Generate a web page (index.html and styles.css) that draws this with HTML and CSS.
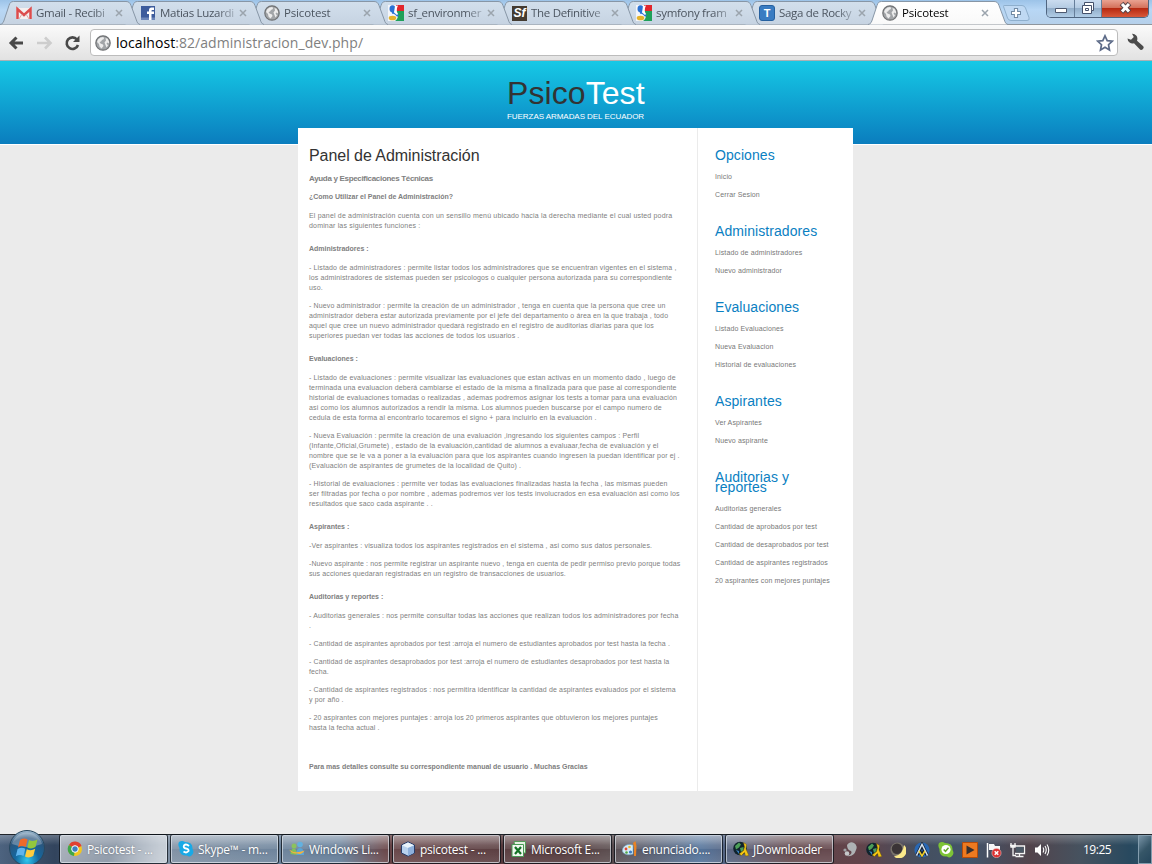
FILE: index.html
```html
<!DOCTYPE html>
<html lang="es">
<head>
<meta charset="utf-8">
<title>Psicotest</title>
<link rel="stylesheet" href="styles.css">
</head>
<body>
<svg class="defs" width="0" height="0">
  <defs>
    <linearGradient id="tabfill" x1="0" y1="0" x2="0" y2="1"><stop offset="0" stop-color="#d2dfec"/><stop offset="1" stop-color="#c6d3e2"/></linearGradient>
    <linearGradient id="tabon" x1="0" y1="0" x2="0" y2="1"><stop offset="0" stop-color="#ffffff"/><stop offset="1" stop-color="#f9f9f9"/></linearGradient>
    <radialGradient id="orb" cx=".5" cy=".85" r=".85"><stop offset="0" stop-color="#2fc7ee"/><stop offset=".4" stop-color="#14679f"/><stop offset=".75" stop-color="#2b557c"/><stop offset="1" stop-color="#a9c4d8"/></radialGradient>
    <symbol id="tab" viewBox="0 0 140 25"><path d="M0 24.5C3 24 3.500 22 4.500 19L9 5.500C10 2.500 11 1.500 13.500 1.500H126C129 1.500 130 3 131 5.500L136 19C137 22.500 138 24 140 24.500"/></symbol>
    <symbol id="globe" viewBox="0 0 16 16"><circle cx="8" cy="8" r="7.200" fill="#a2a5a8" stroke="#6f7173" stroke-width="1.200"/><path d="M3 4.500L5.500 2.500 8.500 2 9 4 7 5 6 6.500 4.500 7 5.500 8.500 8 9.500 8.500 11 6.500 13.500 4.500 11.500 4 9 2 7zM10.500 3L12.500 3.800 14 6.500 14 8.500 12.500 7.500 11.500 8.500 13 10.500 11.500 12.500 10.500 10 9.500 7.500 11 5.500z" fill="#ececec"/></symbol>
    <symbol id="google" viewBox="0 0 16 16"><path d="M0 0H16V16H0z" fill="#f3f5fa"/><path d="M8 0H16V7H9C8 5 9 3 8 0z" fill="#e2262c"/><path d="M9 6H16V16H7C11 13 10 10 8 8z" fill="#1fa05a"/><ellipse cx="4.500" cy="3.800" rx="3" ry="3.500" fill="#2a72d4"/><path d="M4 8C6 7 8 8.500 10 11" stroke="#2a72d4" stroke-width="2.200" fill="none"/><ellipse cx="4.500" cy="13" rx="3.800" ry="2.300" fill="#e5b32c"/><path d="M7 1L10 .5 9 3 8.500 6 10 9 9 10 6 7.500z" fill="#fff"/></symbol>
    <symbol id="jd" viewBox="0 0 16 16"><circle cx="7" cy="7.500" r="6.800" fill="#10232c"/><path d="M2 5L6 1.500 8 3.500 6 6.500 3 8.500zM7 7L10.500 6 10.500 9 8 11z" fill="#4c9e58"/><path d="M3 9L6 10 6 13" fill="#357fc0"/><path d="M10.500 1.500L13.500 3.500 13 8 15.800 14.500 12.500 15 11.500 11.500 8.500 14.500 6 13 10.500 9.500 11.500 6z" fill="#f3c513" stroke="#66520a" stroke-width=".4"/></symbol>
    <symbol id="x" viewBox="0 0 8 8"><path d="M1 1L7 7M7 1L1 7" stroke="#9ba4ad" stroke-width="1.500"/></symbol>
  </defs>
</svg>

<header class="chrome">
  <div class="strip">
    <div class="tab t1"><svg class="shape"><use href="#tab"/></svg><svg class="ico" viewBox="0 0 16 16"><path d="M.5 3H15.500V14H.5z" fill="#f4efef"/><path d="M1.500 14V4L8 10 14.500 4V14" fill="none" stroke="#dc4c4c" stroke-width="2.500"/><path d="M3 14L6 9M13 14L10 9" stroke="#dda7a7"/></svg><span class="label">Gmail - Recibi</span><svg class="close"><use href="#x"/></svg></div>
    <div class="tab t2"><svg class="shape"><use href="#tab"/></svg><svg class="ico" viewBox="0 0 16 16"><path d="M1 1H15V15H1z" fill="#3d5c9c"/><path d="M1 12.500H15V15H1z" fill="#6d87ba"/><path d="M9 15V9H7V6.500H9V5Q9 2.500 11.500 2.500H14V5H12Q11.500 5 11.500 6V6.500H14V9H11.500V15z" fill="#fff"/></svg><span class="label">Matias Luzardi</span><svg class="close"><use href="#x"/></svg></div>
    <div class="tab t3"><svg class="shape"><use href="#tab"/></svg><svg class="ico"><use href="#globe"/></svg><span class="label short">Psicotest</span><svg class="close"><use href="#x"/></svg></div>
    <div class="tab t4"><svg class="shape"><use href="#tab"/></svg><svg class="ico"><use href="#google"/></svg><span class="label">sf_environmer</span><svg class="close"><use href="#x"/></svg></div>
    <div class="tab t5"><svg class="shape"><use href="#tab"/></svg><span class="ico sf">Sf</span><span class="label">The Definitive</span><svg class="close"><use href="#x"/></svg></div>
    <div class="tab t6"><svg class="shape"><use href="#tab"/></svg><svg class="ico"><use href="#google"/></svg><span class="label">symfony fram</span><svg class="close"><use href="#x"/></svg></div>
    <div class="tab t7"><svg class="shape"><use href="#tab"/></svg><span class="ico tt">T</span><span class="label">Saga de Rocky</span><svg class="close"><use href="#x"/></svg></div>
    <div class="tab active"><svg class="shape"><use href="#tab"/></svg><svg class="ico"><use href="#globe"/></svg><span class="label short">Psicotest</span><svg class="close"><use href="#x"/></svg></div>
    <svg class="newtab" viewBox="0 0 28 16"><path d="M1.500 1.500Q1 .5 3 .5H20Q22.500 .5 23.500 3L27 12.500Q28 15.500 25 15.500H9Q6.500 15.500 5.500 13z" fill="#bfd9f3" stroke="#8eafcd"/><path d="M14 3V13M9 8H19" stroke="#7089a3" stroke-width="4.200"/><path d="M14 4V12M10 8H18" stroke="#fff" stroke-width="2.200"/></svg>
    <div class="winbtns">
      <span class="wb min"><svg width="27" height="17"><path d="M8.500 8.500H19.500V12.500H8.500z" fill="#fff" stroke="#4d5970"/></svg></span>
      <span class="wb max"><svg width="26" height="17"><path d="M9.500 2.500H18.500V10.500H16.500V13.500H7.500V5.500H9.500z" fill="#fff" stroke="#44506a"/><path d="M9.500 5.500H16.500V10.500M10.500 8.500H13.500V10.500H10.500z" fill="none" stroke="#44506a"/></svg></span>
      <span class="wb cls"><svg width="46" height="17"><path d="M19.500 3.500L27.500 12M27.500 3.500L19.500 12" stroke="#584449" stroke-width="5"/><path d="M20 4L27 11.500M27 4L20 11.500" stroke="#fff" stroke-width="3"/></svg></span>
    </div>
  </div>
  <div class="toolbar">
    <svg class="nav" viewBox="0 0 82 20"><path d="M23 10H12M16.500 4.500L11 10 16.500 15.500" fill="none" stroke="#484848" stroke-width="3"/><path d="M37 10H49M45 4.500L50.500 10 45 15.500" fill="none" stroke="#cdcdcd" stroke-width="2.600"/><path d="M77 6.500A5.800 5.800 0 1 0 78 12" fill="none" stroke="#484848" stroke-width="2.600"/><path d="M79.500 2.500V9H73z" fill="#484848"/></svg>
    <div class="omni"><svg class="ico"><use href="#globe"/></svg><span class="url"><b>localhost</b>:82/administracion_dev.php/</span><svg class="star" viewBox="0 0 18 18"><path d="M9 1.800L11.200 6.600 16.300 7.200 12.500 10.700 13.500 16 9 13.300 4.500 16 5.500 10.700 1.700 7.200 6.800 6.600z" fill="#fff" stroke="#5d6b88" stroke-width="1.700"/></svg></div>
    <svg class="wrench" viewBox="0 0 18 18"><path d="M1.500 5.500A5 5 0 0 0 8 10.200L13.500 16A2 2 0 0 0 17 13L11 7.700A5 5 0 0 0 6 .8L7.800 4 5 6.800z" fill="#4b4b4b"/></svg>
  </div>
</header>

<div class="page">
  <div class="banner"><div class="brand"><h1>Psico<span>Test</span></h1><p>FUERZAS ARMADAS DEL ECUADOR</p></div></div>
  <div class="sheet">
    <main class="content">
      <h2>Panel de Administración</h2>
      <h3>Ayuda y Especificaciones Técnicas</h3>
      <h4 class="first">¿Como Utilizar el Panel de Administración?</h4>
      <p class="intro">El panel de administración cuenta con un sensillo menú ubicado hacia la derecha mediante el cual usted podra<br>dominar las siguientes funciones :</p>
      <h4>Administradores :</h4>
      <p>- Listado de administradores : permite listar todos los administradores que se encuentran vigentes en el sistema ,<br>los administradores de sistemas pueden ser psicologos o cualquier persona autorizada para su correspondiente<br>uso.</p>
      <p>- Nuevo administrador : permite la creación de un administrador , tenga en cuenta que la persona que cree un<br>administrador debera estar autorizada previamente por el jefe del departamento o área en la que trabaja , todo<br>aquel que cree un nuevo administrador quedará registrado en el registro de auditorias diarias para que los<br>superiores puedan ver todas las acciones de todos los usuarios .</p>
      <h4>Evaluaciones :</h4>
      <p>- Listado de evaluaciones : permite visualizar las evaluaciones que estan activas en un momento dado , luego de<br>terminada una evaluacion deberá cambiarse el estado de la misma a finalizada para que pase al correspondiente<br>historial de evaluaciones tomadas o realizadas , ademas podremos asignar los tests a tomar para una evaluación<br>asi como los alumnos autorizados a rendir la misma. Los alumnos pueden buscarse por el campo numero de<br>cedula de esta forma al encontrarlo tocaremos el signo + para incluirlo en la evaluación .</p>
      <p>- Nueva Evaluación : permite la creación de una evaluación ,ingresando los siguientes campos : Perfil<br>(Infante,Oficial,Grumete) , estado de la evaluación,cantidad de alumnos a evaluaar,fecha de evaluación y el<br>nombre que se le va a poner a la evaluación para que los aspirantes cuando ingresen la puedan identificar por ej .<br>(Evaluación de aspirantes de grumetes de la localidad de Quito) .</p>
      <p>- Historial de evaluaciones : permite ver todas las evaluaciones finalizadas hasta la fecha , las mismas pueden<br>ser filtradas por fecha o por nombre , ademas podremos ver los tests involucrados en esa evaluación asi como los<br>resultados que saco cada aspirante . .</p>
      <h4>Aspirantes :</h4>
      <p>-Ver aspirantes : visualiza todos los aspirantes registrados en el sistema , asi como sus datos personales.</p>
      <p class="tight">-Nuevo aspirante : nos permite registrar un aspirante nuevo , tenga en cuenta de pedir permiso previo porque todas<br>sus acciones quedaran registradas en un registro de transacciones de usuarios.</p>
      <h4>Auditorias y reportes :</h4>
      <p>- Auditorias generales : nos permite consultar todas las acciones que realizan todos los administradores por fecha<br>.</p>
      <p class="tight">- Cantidad de aspirantes aprobados por test :arroja el numero de estudiantes aprobados por test hasta la fecha .</p>
      <p class="tight">- Cantidad de aspirantes desaprobados por test :arroja el numero de estudiantes desaprobados por test hasta la<br>fecha.</p>
      <p>- Cantidad de aspirantes registrados : nos permitira identificar la cantidad de aspirantes evaluados por el sistema<br>y por año .</p>
      <p class="tight">- 20 aspirantes con mejores puntajes : arroja los 20 primeros aspirantes que obtuvieron los mejores puntajes<br>hasta la fecha actual .</p>
      <h4 class="last">Para mas detalles consulte su correspondiente manual de usuario . Muchas Gracias</h4>
    </main>
    <aside class="side">
      <section><h2>Opciones</h2><a>Inicio</a><a>Cerrar Sesion</a></section>
      <section><h2>Administradores</h2><a>Listado de administradores</a><a>Nuevo administrador</a></section>
      <section><h2>Evaluaciones</h2><a>Listado Evaluaciones</a><a>Nueva Evaluacion</a><a>Historial de evaluaciones</a></section>
      <section><h2>Aspirantes</h2><a>Ver Aspirantes</a><a>Nuevo aspirante</a></section>
      <section><h2>Auditorias y<br>reportes</h2><a>Auditorias generales</a><a>Cantidad de aprobados por test</a><a>Cantidad de desaprobados por test</a><a>Cantidad de aspirantes registrados</a><a>20 aspirantes con mejores puntajes</a></section>
    </aside>
  </div>
</div>

<footer class="taskbar">
  <svg class="start" viewBox="0 0 38 38"><circle cx="19" cy="19" r="17.500" fill="url(#orb)" stroke="#28485f"/><path d="M4 15A15.500 15.500 0 0 1 34 15Q19 21 4 15z" fill="#fff" opacity=".28"/><path d="M12 11Q16 8.500 19.500 10.500L17.800 18Q14 16 10 18.500z" fill="#ee6a2b"/><path d="M21 11Q25 13 29.500 10.500L27.500 18Q23.500 20.500 19.300 18.500z" fill="#93c83d"/><path d="M9.600 20Q13.500 17.800 17.300 19.700L15.500 27Q12 25 7.800 27.300z" fill="#5fb4ee"/><path d="M18.800 20.300Q23 22.200 27.200 19.800L25.300 27Q21 29.500 17 27.500z" fill="#fdcc3e"/></svg>
  <div class="tasks">
    <div class="task on"><svg viewBox="0 0 16 16"><circle cx="8" cy="8" r="7" fill="#f2c61f"/><path d="M8 8L2 4A7 7 0 0 1 14.500 5z" fill="#e13f32"/><path d="M8 8L2 4A7 7 0 0 0 7 15z" fill="#3fa648"/><circle cx="8" cy="8" r="3.300" fill="#3d7ec2" stroke="#fff"/></svg><span>Psicotest - ...</span></div>
    <div class="task"><svg viewBox="0 0 16 16"><path d="M1 1Q4-1 7 1Q15 1 14.500 8Q17 12 13 15Q11 16 9 14.500Q1 15 1.500 7Q-.5 4 1 1z" fill="#19a9e6"/><path d="M11 5Q8 2.500 6 4.500Q5 7 8 7.500Q11 8 10.500 10Q8.500 12.500 5.500 10.500" fill="none" stroke="#fff" stroke-width="1.900"/></svg><span>Skype™ - m...</span></div>
    <div class="task"><svg viewBox="0 0 16 16"><circle cx="5" cy="5" r="2.500" fill="#8cc25e"/><circle cx="11" cy="3.500" r="2.800" fill="#62b1e0"/><path d="M1.500 13Q2 7 5 7.500Q8 8 8 14z" fill="#83bf5c"/><path d="M7.500 14Q7 7 11 7Q15 7 15 14z" fill="#5aa5d8"/><path d="M0 8.500Q6 13.500 15.500 9.500Q13 14 8 12.500Q3 13 0 8.500z" fill="#f5b33b"/></svg><span>Windows Li...</span></div>
    <div class="task"><svg viewBox="0 0 16 16"><path d="M1.500 4L8 .8 14.500 4V12L8 15.200 1.500 12z" fill="#b9d2ee" stroke="#283c68"/><path d="M2 4.300L8 7 14 4.300 8 1.500z" fill="#eaf4fc"/><path d="M8 7V15L14 12V4.500z" fill="#8eb0dc"/></svg><span>psicotest - ...</span></div>
    <div class="task"><svg viewBox="0 0 16 16"><path d="M3 .5H14.500V12H5z" fill="#e4f1e1" stroke="#559b58"/><path d="M1 3.500H12.500V15.500H1z" fill="#f0f8ef" stroke="#4a9a55"/><path d="M4 6L10 13M10 6L4 13" stroke="#147325" stroke-width="2.200"/></svg><span>Microsoft E...</span></div>
    <div class="task"><svg viewBox="0 0 16 16"><path d="M1 7Q4 2 11 4L11 13Q5 15 1.500 12Q-.5 10 1 7z" fill="#d6edf9" stroke="#6fa8c8" stroke-width=".6"/><circle cx="4" cy="8" r="1.400" fill="#e04938"/><circle cx="7.500" cy="6" r="1.300" fill="#f1b82a"/><circle cx="4.500" cy="11.500" r="1.300" fill="#53a646"/><circle cx="8.500" cy="11" r="1.600" fill="#3c7bc4"/><path d="M12 15V6L11 2 13.500 0 14.500 5 14 15z" fill="#e88325"/></svg><span>enunciado....</span></div>
    <div class="task"><svg><use href="#jd"/></svg><span>JDownloader</span></div>
  </div>
  <div class="tray">
    <svg viewBox="0 0 16 16"><path d="M5 3A5 5 0 1 1 14 8Q12 15 5 14Q11 12 9 9Q5 8 5 3z" fill="#aeb2b4"/><circle cx="3" cy="8" r="1.600" fill="#9fa3a6"/><circle cx="5" cy="11.500" r="2.300" fill="#c5c8ca"/></svg>
    <svg><use href="#jd"/></svg>
    <svg viewBox="0 0 16 16"><circle cx="7.500" cy="7.500" r="7" fill="#77726a"/><path d="M14 3A7.500 7.500 0 1 1 4 14.500Q13 13 14 3z" fill="#fbe98a"/><circle cx="7" cy="6.800" r="5.200" fill="#3a3436"/></svg>
    <svg viewBox="0 0 16 16"><circle cx="8" cy="8" r="7.600" fill="#2868b5"/><path d="M3 13L8 3 13 13M5 8L8 13 11 8" fill="none" stroke="#18222f" stroke-width="3.400"/><path d="M2.500 13.500L8 2.500 13.500 13.500" fill="none" stroke="#d6e4f2" stroke-width="1.500"/><path d="M5 9L8 14 11 9" fill="none" stroke="#f0cf29" stroke-width="1.500"/></svg>
    <svg viewBox="0 0 16 16"><path d="M1 1Q4-1 7 1Q15 1 14.500 8Q17 12 13 15Q11 16 9 14.500Q1 15 1.500 7Q-.5 4 1 1z" fill="#7dc436"/><circle cx="8" cy="7.500" r="4.600" fill="#fff"/><path d="M5.700 7.500L7.500 9.300 10.500 5.700" fill="none" stroke="#67a92a" stroke-width="1.500"/></svg>
    <svg viewBox="0 0 16 16"><path d="M.5.5H15.500V15.500H.5z" fill="#ee7a20" stroke="#b74c0a"/><path d="M4.500 3.500V12.500L12.500 8z" fill="#38302f"/></svg>
    <svg viewBox="0 0 16 16"><path d="M1.500 1V15.500" stroke="#fff" stroke-width="1.500"/><path d="M3 2H8L9 4H14V9H8L7 8H3z" fill="#f6f6f6"/><circle cx="10.500" cy="11" r="4.600" fill="#db3030" stroke="#f0bbbb" stroke-width=".6"/><path d="M8.700 9.200L12.300 12.800M12.300 9.200L8.700 12.800" stroke="#fff" stroke-width="1.500"/></svg>
    <svg viewBox="0 0 16 16"><path d="M5 4H14.500V11.500H5M9.500 12V14M5.500 14.500H13.500M1 1V5H5V1M0 3.500H6M3 5V13.500H6" fill="none" stroke="#f4f4f4" stroke-width="1.300"/><path d="M6 5H13.500V10.500H6z" fill="#4b5865"/></svg>
    <svg viewBox="0 0 16 16"><path d="M1 5.500H3.500L7 2V14L3.500 10.500H1z" fill="#fff"/><path d="M9 5.500Q10.500 8 9 10.500M11 4Q13.500 8 11 12M13 2.500Q16.500 8 13 13.500" fill="none" stroke="#fff" stroke-width="1.100"/></svg>
  </div>
  <span class="clock">19:25</span>
  <span class="peek"></span>
</footer>
</body>
</html>
```

FILE: styles.css
```css
* { box-sizing: border-box; margin: 0; padding: 0; }
body { width: 1152px; height: 864px; overflow: hidden; background: #ebebeb; font-family: "Liberation Sans", Arial, sans-serif; display: flex; flex-direction: column; }
.defs { position: absolute; }
svg { flex: none; display: block; }

/* browser window */
.chrome { height: 61px; flex: none; font-family: "Open Sans", "Noto Sans", sans-serif; }
.strip { height: 25px; display: flex; background: linear-gradient(#9cc3e8, #b8d7f5 40%, #b5d0ea); border-bottom: 1px solid #8e959c; }
.tab { position: relative; width: 140px; height: 25px; flex: none; margin-right: -16px; padding: 5px 0 0 16px; display: flex; color: #4c5560; fill: url(#tabfill); stroke: #8796a6; }
.tab > * { position: relative; stroke: none; }
.tab .shape { position: absolute; left: 0; top: 0; width: 140px; height: 25px; stroke: #8796a6; }
.t1 { z-index: 8; } .t2 { z-index: 7; } .t3 { z-index: 6; } .t4 { z-index: 5; } .t5 { z-index: 4; } .t6 { z-index: 3; } .t7 { z-index: 2; }
.active { z-index: 9; color: #000; fill: url(#tabon); padding-left: 14px; }
.ico { width: 16px; height: 16px; flex: none; }
.label { width: 76px; margin-left: 4px; height: 17px; line-height: 16px; font-size: 11.500px; letter-spacing: -0.3px; white-space: nowrap; -webkit-mask-image: linear-gradient(90deg, #000 75%, rgba(0,0,0,.25)); mask-image: linear-gradient(90deg, #000 75%, rgba(0,0,0,.25)); }
.short { letter-spacing: -0.15px; }
.close { width: 8px; height: 8px; margin: 4px 0 0 3px; }
.sf { width: 15px; height: 15px; margin: 1px 0 0 0; background: #443b31; color: #fff; font: italic bold 12px/14px "Liberation Sans", sans-serif; text-align: center; }
.sf + .label { width: 77px; }
.tt { background: #397cc2; border: 1px solid #25609f; border-radius: 3px; color: #fff; font: bold 11px/14px "Liberation Sans", sans-serif; text-align: center; margin-left: -1px; }
.newtab { width: 28px; height: 16px; margin: 5px 0 0 10px; position: relative; }
.winbtns { display: flex; height: 18px; margin-left: 16px; border: 1px solid #4f6580; border-top: 0; border-radius: 0 0 5px 5px; overflow: hidden; }
.wb { display: block; height: 17px; background: linear-gradient(#cbdcef, #b4cbe3 45%, #92aeca 50%, #b0cce6); border-right: 1px solid #667e9a; }
.min { width: 28px; } .max { width: 27px; }
.cls { width: 46px; border: 0; background: linear-gradient(#e9a291, #d4725c 45%, #b72a12 50%, #d8583a); }
.toolbar { height: 36px; display: flex; align-items: flex-start; background: linear-gradient(#fafafa, #e2e2e2); border-bottom: 1px solid #a9b1b5; }
.nav { width: 82px; height: 20px; margin: 8px 0 0 0; }
.omni { width: 1028px; height: 27px; margin: 4px 0 0 8px; display: flex; align-items: center; background: #fff; border: 1px solid #bcbcbc; border-radius: 4px; padding: 0 3px 0 4px; }
.url { flex: 1; margin-left: 5px; color: #808080; font-size: 14px; line-height: 24px; letter-spacing: 0.06px; white-space: nowrap; }
.url b { font-weight: 400; color: #000; }
.star { width: 18px; height: 18px; }
.wrench { width: 18px; height: 18px; margin: 8px 0 0 8px; }

/* site */
.page { height: 773px; flex: none; }
.banner { height: 84px; background: linear-gradient(#16c9e6, #0a7dbe); border-bottom: 1px solid #fff; display: flex; padding: 15px 0 0 507px; color: #fff; }
.brand h1 { font-size: 32px; line-height: 34px; font-weight: 400; color: #333; letter-spacing: 0.08px; white-space: nowrap; }
.brand h1 span { color: #fff; }
.brand p { font-size: 8px; line-height: 10px; margin-top: 2px; white-space: nowrap; letter-spacing: -0.05px; }
.sheet { position: relative; width: 555px; height: 663px; margin: -17px 0 0 298px; background: #fff; display: flex; }
.content { width: 400px; border-right: 1px solid #ebebeb; padding: 18px 0 0 11px; color: #808080; white-space: nowrap; display: flex; flex-direction: column; }
.content h2 { font-size: 16px; line-height: 20px; font-weight: 400; color: #333; letter-spacing: -0.05px; }
.content h3 { font-size: 8px; line-height: 10px; margin: 8px 0 7px; letter-spacing: -0.32px; }
.content h4 { font-size: 7px; line-height: 10px; margin: 5px 0 9px; letter-spacing: -0.02px; }
.content .first { margin-top: 1px; }
.content .last { margin-top: 21px; }
.content p { font-size: 7px; line-height: 10px; margin-bottom: 8px; letter-spacing: 0.145px; }
.content .intro { letter-spacing: 0.175px; }
.content .tight { letter-spacing: 0.11px; }
.side { padding: 22px 0 0 17px; white-space: nowrap; }
.side section { margin-bottom: 26px; display: flex; flex-direction: column; gap: 8px; }
.side h2 { font-size: 14px; line-height: 10px; font-weight: 400; color: #0a80c2; margin-bottom: 4px; letter-spacing: 0.07px; }
.side a { font-size: 7px; line-height: 10px; color: #777; letter-spacing: 0.13px; }

/* desktop taskbar */
.taskbar { height: 30px; flex: none; display: flex; align-items: flex-start; border-top: 1px solid #20252b; font-family: "Open Sans", "Noto Sans", sans-serif; color: #fff; background: linear-gradient(rgba(255,255,255,.25), rgba(255,255,255,0) 35%), linear-gradient(90deg, #4d637f 0, #32445d 55px, #8090a3 160px, #70859c 240px, #5f7995 340px, #664346 385px, #4f3437 560px, #57494b 610px, #4e6f98 700px, #604448 790px, #62434a 860px, #454f5f 920px, #42546a 970px, #52444c 1030px, #46525f 1080px, #28495f 1130px, #2e5369 1152px); }
.start { width: 38px; height: 38px; margin: -6px 0 0 8px; position: relative; }
.tasks { display: flex; gap: 4px; margin-left: 14px; }
.task { width: 107px; height: 28px; border: 1px solid rgba(225,231,238,.65); border-radius: 2px; box-shadow: 0 0 0 1px rgba(10,15,22,.75); padding: 5px 0 0 6px; display: flex; background: linear-gradient(rgba(255,255,255,.32), rgba(255,255,255,.12) 48%, rgba(255,255,255,.03) 50%, rgba(255,255,255,.12)); font-size: 12px; line-height: 17px; letter-spacing: -0.25px; white-space: nowrap; text-shadow: 0 0 2px rgba(0,0,0,.35); }
.task svg { width: 16px; height: 16px; margin-right: 4px; }
.task.on { background: linear-gradient(115deg, rgba(255,255,255,.6), rgba(255,255,255,.35) 50%, rgba(255,255,255,.6)); }
.tray { display: flex; gap: 8px; margin: 7px 0 0 9px; }
.tray svg { width: 16px; height: 16px; }
.clock { width: 34px; margin: 6px 0 0 33px; font-size: 12px; line-height: 17px; letter-spacing: -0.5px; }
.peek { width: 14px; height: 29px; margin-left: 21px; border: 1px solid #839dae; background: linear-gradient(135deg, #7893a6, #365668 50%, #25465c); }
```
